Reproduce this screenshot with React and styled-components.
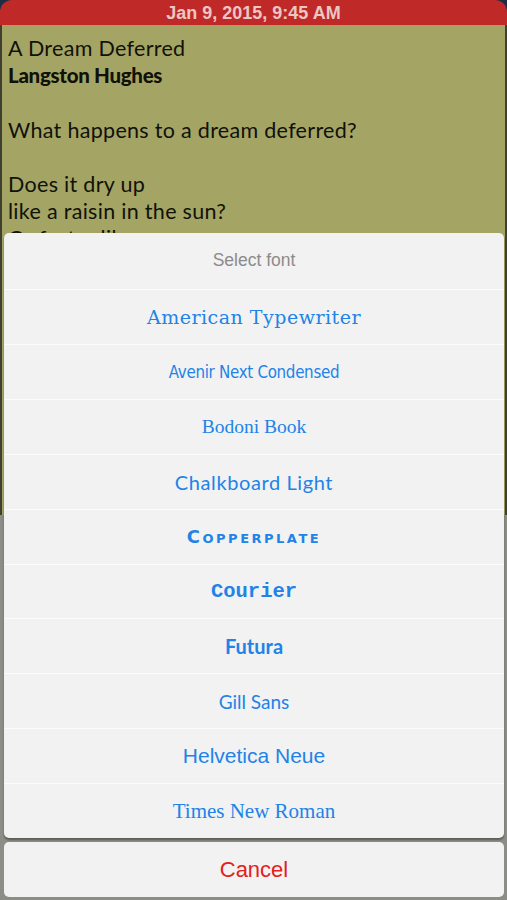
import styled, { createGlobalStyle, css } from "styled-components";

const GlobalStyle = createGlobalStyle`
  html, body {
    margin: 0;
    padding: 0;
    background: #1f2d44;
  }
  * {
    box-sizing: border-box;
  }
`;

const Screen = styled.div`
  position: relative;
  width: 507px;
  height: 900px;
  overflow: hidden;
  display: flex;
  flex-direction: column;
  background: #1f2d44;
`;

const DateBar = styled.div`
  height: 25px;
  flex: none;
  background: #bf2a29;
  border-radius: 12px 12px 0 0;
  display: flex;
  align-items: center;
  justify-content: center;
  color: #ebc6c3;
  font-family: "Liberation Sans", Arial, sans-serif;
  font-weight: bold;
  font-size: 18px;
  padding-top: 1px;
`;

const Note = styled.div`
  height: 490px;
  flex: none;
  background: #a4a565;
  border-left: 2px solid #3f4030;
  border-right: 2px solid #3f4030;
  padding: 10px 0 0 6px;
  overflow: hidden;
  font-family: "Lato", "DejaVu Sans", sans-serif;
  font-size: 21.5px;
  letter-spacing: 0.3px;
  line-height: 27.2px;
  color: #111108;
`;

const Line = styled.div`
  height: 27.2px;
  white-space: nowrap;
  ${(p) =>
    p.$bold &&
    css`
      font-weight: 900;
      font-size: 20.5px;
      letter-spacing: -0.3px;
    `}
`;

const Lower = styled.div`
  flex: 1;
  background: #8d8d87;
`;

const Overlay = styled.div`
  position: absolute;
  left: 4px;
  right: 3px;
  bottom: 3px;
  display: flex;
  flex-direction: column;
  gap: 4px;
`;

const Sheet = styled.div`
  background: #f2f2f2;
  border-radius: 5px;
  overflow: hidden;
  display: flex;
  flex-direction: column;
  box-shadow: 0 2px 2px rgba(0, 0, 0, 0.35);
`;

const SheetTitle = styled.div`
  height: 56px;
  display: flex;
  align-items: center;
  justify-content: center;
  color: #8b8b8b;
  font-family: "Liberation Sans", Arial, sans-serif;
  font-size: 17.5px;
  padding-bottom: 1px;
`;

const Option = styled.div`
  height: 54.9px;
  display: flex;
  align-items: center;
  justify-content: center;
  border-top: 1px solid #fcfcfc;
  color: #2183e8;
  white-space: nowrap;
  font-family: ${(p) => p.$family};
  font-size: ${(p) => p.$size}px;
  font-weight: ${(p) => p.$weight || "normal"};
  font-stretch: ${(p) => p.$stretch || "normal"};
  font-variant: ${(p) => p.$variant || "normal"};
  letter-spacing: ${(p) => p.$spacing || 0}px;
`;

const CancelButton = styled.div`
  height: 55px;
  background: #f2f2f2;
  border-radius: 5px;
  display: flex;
  align-items: center;
  justify-content: center;
  color: #e4201c;
  font-family: "Liberation Sans", Arial, sans-serif;
  font-size: 22px;
`;

const poem = [
  { text: "A Dream Deferred" },
  { text: "Langston Hughes", bold: true },
  { text: "" },
  { text: "What happens to a dream deferred?" },
  { text: "" },
  { text: "Does it dry up" },
  { text: "like a raisin in the sun?" },
  { text: "Or fester like a sore—" },
  { text: "And then run?" },
];

const fonts = [
  { name: "American Typewriter", family: '"DejaVu Serif", serif', size: 19, spacing: 0.5 },
  { name: "Avenir Next Condensed", family: '"DejaVu Sans", sans-serif', size: 16.8, stretch: "condensed", spacing: -0.3 },
  { name: "Bodoni Book", family: '"Liberation Serif", serif', size: 19.5 },
  { name: "Chalkboard Light", family: '"Lato", sans-serif', size: 20, spacing: 0.6 },
  { name: "Copperplate", family: '"DejaVu Sans", sans-serif', size: 18, variant: "small-caps", weight: "bold", spacing: 2.5 },
  { name: "Courier", family: '"Liberation Mono", monospace', size: 20.5, weight: "bold" },
  { name: "Futura", family: '"Lato", sans-serif', size: 20, weight: "bold" },
  { name: "Gill Sans", family: '"Lato", sans-serif', size: 19 },
  { name: "Helvetica Neue", family: '"Liberation Sans", Arial, sans-serif', size: 21 },
  { name: "Times New Roman", family: '"Liberation Serif", serif', size: 21 },
];

const App = () => {
  return (
    <>
      <GlobalStyle />
      <Screen>
        <DateBar>Jan 9, 2015, 9:45 AM</DateBar>
        <Note>
          {poem.map((line, i) => (
            <Line key={i} $bold={line.bold}>
              {line.text}
            </Line>
          ))}
        </Note>
        <Lower />

        <Overlay>
          <Sheet>
            <SheetTitle>Select font</SheetTitle>
            {fonts.map((f) => (
              <Option
                key={f.name}
                $family={f.family}
                $size={f.size}
                $weight={f.weight}
                $stretch={f.stretch}
                $variant={f.variant}
                $spacing={f.spacing}
              >
                {f.name}
              </Option>
            ))}
          </Sheet>
          <CancelButton>Cancel</CancelButton>
        </Overlay>
      </Screen>
    </>
  );
};

export default App;
